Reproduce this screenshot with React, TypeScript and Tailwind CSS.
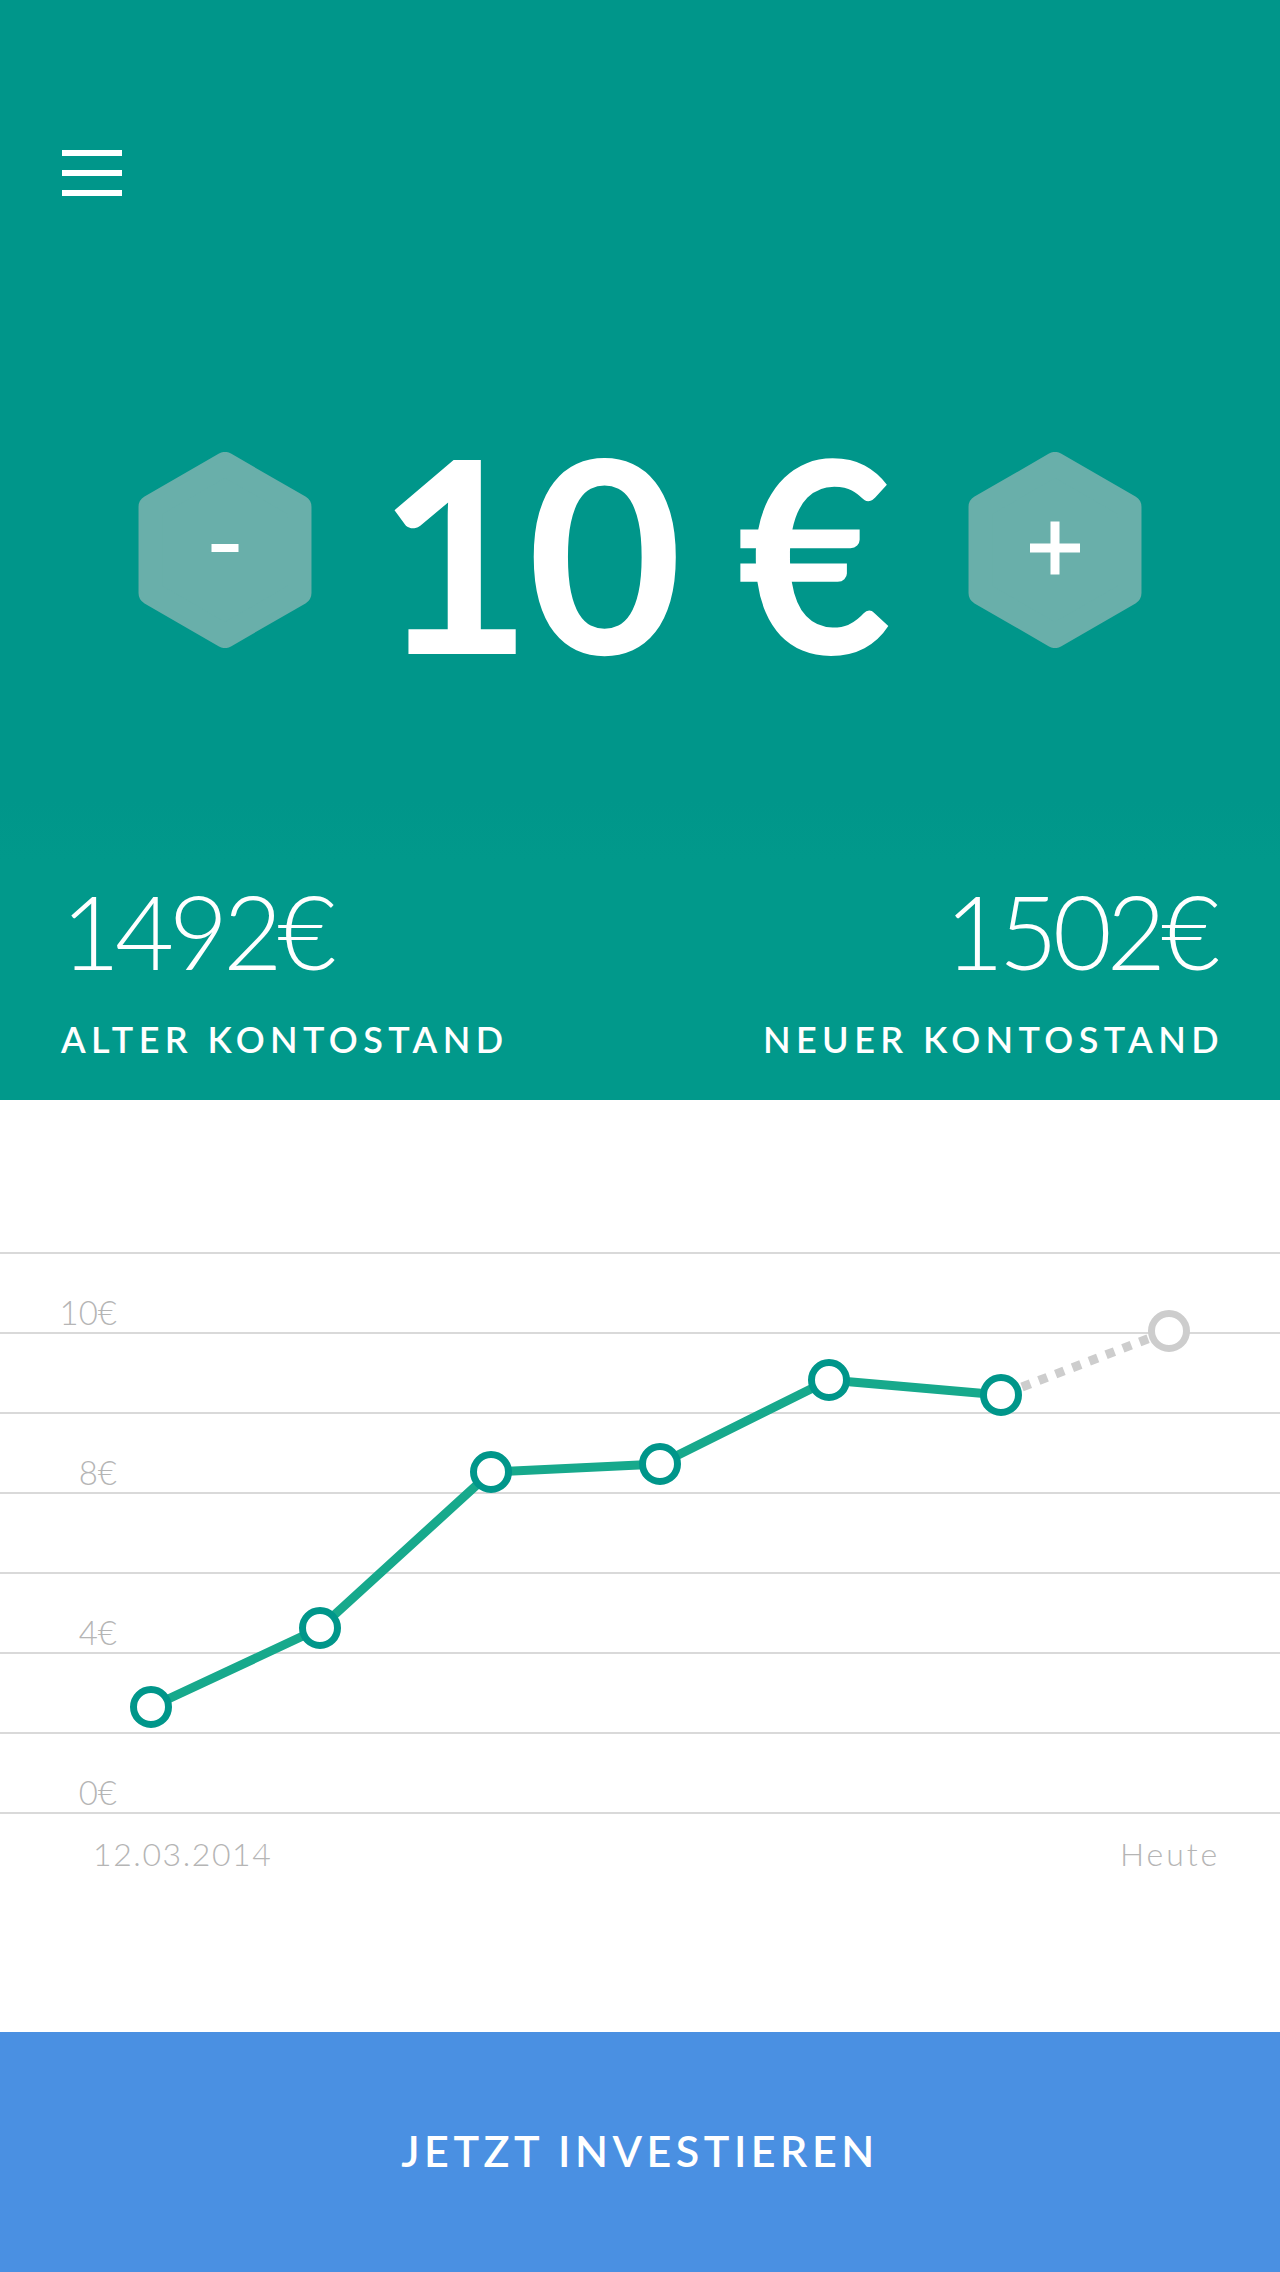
import React from "react";

function Hex({ kind }: { kind: "minus" | "plus" }) {
  return (
    <svg
      viewBox="-87 -98 174 196"
      className="w-[174px] h-[196px] shrink-0"
      aria-label={kind === "minus" ? "weniger" : "mehr"}
    >
      <polygon
        points="0,-86 74.48,-43 74.48,43 0,86 -74.48,43 -74.48,-43"
        fill="#69afaa"
        stroke="#69afaa"
        strokeWidth="24"
        strokeLinejoin="round"
      />
      {kind === "minus" ? (
        <rect x="-13.5" y="-6" width="27" height="8" fill="#ffffff" />
      ) : (
        <>
          <rect x="-4.5" y="-28.5" width="9" height="53" fill="#ffffff" />
          <rect x="-25" y="-6.5" width="50" height="9" fill="#ffffff" />
        </>
      )}
    </svg>
  );
}

const pts: [number, number][] = [
  [151, 607],
  [320, 528],
  [491, 372],
  [660, 364],
  [829, 280],
  [1001, 295],
];

function Chart() {
  const gridRows = ["10€", "", "8€", "", "4€", "", "0€"];
  return (
    <div className="relative h-[932px] bg-white">
      <div className="pt-[152px] flex flex-col">
        <div className="h-[2px] bg-[#d9d9d9]" />
        {gridRows.map((label, i) => (
          <React.Fragment key={i}>
            <div className="h-[78px] flex items-end">
              <div className="w-[117px] text-right text-[33px] leading-none font-light text-[#b5b5b5] pb-[3px]">
                {label}
              </div>
            </div>
            <div className="h-[2px] bg-[#d9d9d9]" />
          </React.Fragment>
        ))}
        <div className="mt-[24px] flex justify-between pl-[93px] pr-[60px] text-[32px] leading-none font-light text-[#b5b5b5]">
          <span className="tracking-[0.05em]">12.03.2014</span>
          <span className="tracking-[0.09em]">Heute</span>
        </div>
      </div>
      <svg
        className="absolute inset-0 w-[1280px] h-[932px]"
        viewBox="0 0 1280 932"
        aria-hidden="true"
      >
        <line
          x1="1022"
          y1="287"
          x2="1150"
          y2="238"
          stroke="#cdcdcd"
          strokeWidth="9"
          strokeDasharray="9 9"
        />
        <circle cx="1169" cy="231" r="17.5" fill="#ffffff" stroke="#cdcdcd" strokeWidth="7" />
        <polyline
          points={pts.map((p) => p.join(",")).join(" ")}
          fill="none"
          stroke="#17a98c"
          strokeWidth="9"
          strokeLinejoin="round"
        />
        {pts.map(([x, y], i) => (
          <circle key={i} cx={x} cy={y} r="17.5" fill="#ffffff" stroke="#00968a" strokeWidth="7" />
        ))}
      </svg>
    </div>
  );
}

export default function App() {
  return (
    <div className="w-[1280px] h-[2272px] flex flex-col font-['Lato',sans-serif] overflow-hidden">
      <header className="h-[1100px] shrink-0 flex flex-col bg-[linear-gradient(180deg,#00968a_0px,#00968a_800px,#01998b_860px,#01998b_100%)] text-white">
        <div className="pt-[150px] pl-[62px]">
          <div className="flex flex-col gap-[14px] w-[60px]" aria-label="Menü">
            <div className="h-[6px] bg-white" />
            <div className="h-[6px] bg-white" />
            <div className="h-[6px] bg-white" />
          </div>
        </div>
        <div className="mt-[256px] h-[196px] flex items-center justify-between px-[138px]">
          <Hex kind="minus" />
          <div className="flex-1 text-center text-[268px] leading-[196px] font-bold whitespace-nowrap tracking-[-0.02em] pr-[16px]">
            10 €
          </div>
          <Hex kind="plus" />
        </div>
        <div className="mt-[232px] flex justify-between px-[61px]">
          <div className="flex flex-col items-start">
            <div className="text-[102px] leading-none font-light tracking-[-0.05em]">1492€</div>
            <div className="mt-[39px] text-[36px] leading-none font-semibold tracking-[0.15em]">
              ALTER KONTOSTAND
            </div>
          </div>
          <div className="flex flex-col items-end">
            <div className="text-[102px] leading-none font-light tracking-[-0.05em] mr-[4px]">1502€</div>
            <div className="mt-[39px] text-[36px] leading-none font-semibold tracking-[0.15em] mr-[-5px]">
              NEUER KONTOSTAND
            </div>
          </div>
        </div>
      </header>
      <Chart />
      <button className="h-[240px] shrink-0 w-full bg-[#4a90e2] text-white text-[43px] leading-none font-semibold tracking-[0.105em] flex items-center justify-center pb-[4px]">
        JETZT INVESTIEREN
      </button>
    </div>
  );
}
